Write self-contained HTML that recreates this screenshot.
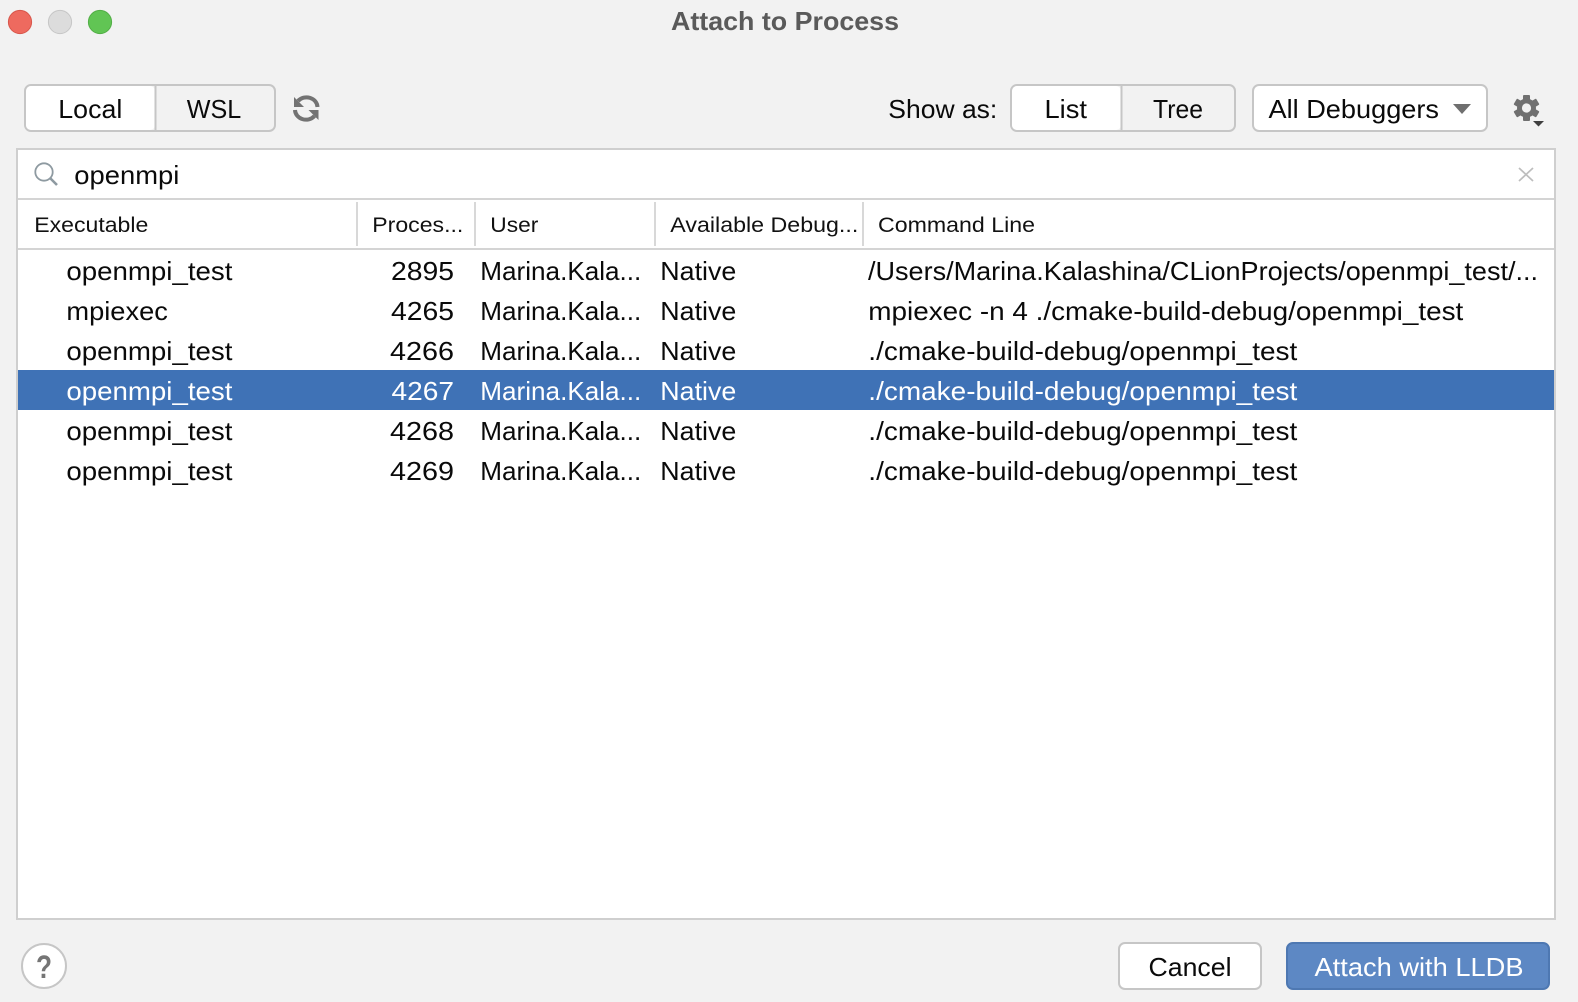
<!DOCTYPE html>
<html><head><meta charset="utf-8"><title>Attach to Process</title>
<style>
html,body{margin:0;padding:0;background:#f2f2f2;width:1578px;height:1002px;overflow:hidden}
svg{display:block}
text{font-family:"Liberation Sans",sans-serif;font-size:26px;fill:#0a0a0a}
.h{font-size:21.5px;fill:#111}
.w{fill:#fff}
</style></head><body>
<svg width="1578" height="1002" viewBox="0 0 1578 1002" xmlns="http://www.w3.org/2000/svg">
<rect width="1578" height="1002" fill="#f2f2f2"/>
<!-- traffic lights -->
<circle cx="20" cy="22" r="11.6" fill="#ee6a5f" stroke="#d8564b" stroke-width="1"/>
<circle cx="60" cy="22" r="11.6" fill="#dcdcdc" stroke="#c6c6c6" stroke-width="1"/>
<circle cx="100" cy="22" r="11.6" fill="#61c554" stroke="#52ae46" stroke-width="1"/>
<text x="671" y="30" style="font-size:26px;font-weight:700;fill:#5a5a5a" textLength="228" lengthAdjust="spacingAndGlyphs">Attach to Process</text>

<!-- Local / WSL -->
<rect x="25" y="85" width="250" height="46" rx="6" fill="#f2f2f2" stroke="#c6c6c6" stroke-width="2"/>
<rect x="26" y="86" width="129" height="44" rx="5" fill="#fff"/>
<line x1="155.5" y1="85" x2="155.5" y2="131" stroke="#c6c6c6" stroke-width="2"/>
<text x="58.3" y="118" textLength="64" lengthAdjust="spacingAndGlyphs">Local</text>
<text x="186.8" y="118" textLength="54.5" lengthAdjust="spacingAndGlyphs">WSL</text>

<!-- refresh -->
<g fill="none" stroke="#737373" stroke-width="4">
<path d="M317.5 107 A11 10 0 0 0 298 101"/>
<path d="M295 110 A11 10 0 0 0 314.5 116"/>
</g>
<path d="M294 97 L294 107 L304 107 Z" fill="#737373"/>
<path d="M318.5 120 L318.5 110 L308.5 110 Z" fill="#737373"/>

<!-- Show as -->
<text x="888.3" y="118" textLength="109" lengthAdjust="spacingAndGlyphs">Show as:</text>
<rect x="1011" y="85" width="224" height="46" rx="6" fill="#f2f2f2" stroke="#c6c6c6" stroke-width="2"/>
<rect x="1012" y="86" width="109" height="44" rx="5" fill="#fff"/>
<line x1="1121.5" y1="85" x2="1121.5" y2="131" stroke="#c6c6c6" stroke-width="2"/>
<text x="1044.5" y="118" textLength="42.5" lengthAdjust="spacingAndGlyphs">List</text>
<text x="1153" y="118" textLength="50" lengthAdjust="spacingAndGlyphs">Tree</text>

<!-- Debuggers -->
<rect x="1253" y="85" width="234" height="46" rx="6" fill="#fff" stroke="#c6c6c6" stroke-width="2"/>
<text x="1268.5" y="118" textLength="170.5" lengthAdjust="spacingAndGlyphs">All Debuggers</text>
<path d="M1453 104 H1471 L1462 114 Z" fill="#6f6f6f"/>

<!-- gear -->
<g transform="translate(1526.5 108)">
<g fill="#707070">
<rect x="-3.5" y="-13" width="7" height="26" rx="1"/>
<rect x="-3.5" y="-13" width="7" height="26" rx="1" transform="rotate(60)"/>
<rect x="-3.5" y="-13" width="7" height="26" rx="1" transform="rotate(120)"/>
<circle r="9.5"/>
</g>
<circle r="4.6" fill="#f2f2f2"/>
</g>
<path d="M1533 121 H1544 L1538.5 126.5 Z" fill="#3f3f3f"/>

<!-- main panel -->
<rect x="17" y="149" width="1538" height="770" fill="#fff" stroke="#cfcfcf" stroke-width="2"/>
<line x1="18" y1="199" x2="1554" y2="199" stroke="#d4d4d4" stroke-width="2"/>
<line x1="18" y1="249" x2="1554" y2="249" stroke="#d4d4d4" stroke-width="2"/>

<!-- search -->
<g fill="none" stroke="#8e9aa1">
<circle cx="44" cy="172" r="8.7" stroke-width="1.8"/>
<line x1="50.5" y1="178.5" x2="57" y2="185" stroke-width="2.6"/>
</g>
<text x="74.3" y="184" textLength="105" lengthAdjust="spacingAndGlyphs">openmpi</text>
<g stroke="#bdbdbd" stroke-width="1.7"><line x1="1519" y1="168" x2="1533" y2="181"/><line x1="1533" y1="168" x2="1519" y2="181"/></g>

<!-- headers -->
<g stroke="#d8d8d8" stroke-width="2">
<line x1="357" y1="202" x2="357" y2="246"/>
<line x1="475" y1="202" x2="475" y2="246"/>
<line x1="655" y1="202" x2="655" y2="246"/>
<line x1="863" y1="202" x2="863" y2="246"/>
</g>
<text class="h" x="34.3" y="232" textLength="114" lengthAdjust="spacingAndGlyphs">Executable</text>
<text class="h" x="372.3" y="232" textLength="91" lengthAdjust="spacingAndGlyphs">Proces...</text>
<text class="h" x="490.3" y="232" textLength="48" lengthAdjust="spacingAndGlyphs">User</text>
<text class="h" x="670.3" y="232" textLength="188" lengthAdjust="spacingAndGlyphs">Available Debug...</text>
<text class="h" x="878" y="232" textLength="157" lengthAdjust="spacingAndGlyphs">Command Line</text>

<!-- selection -->
<rect x="18" y="370" width="1536" height="40" fill="#3f72b6"/>

<!-- rows -->
<text x="66.4" y="280" textLength="166" lengthAdjust="spacingAndGlyphs">openmpi_test</text>
<text x="391" y="280" textLength="63" lengthAdjust="spacingAndGlyphs">2895</text>
<text x="480.3" y="280" textLength="161" lengthAdjust="spacingAndGlyphs">Marina.Kala...</text>
<text x="660.3" y="280" textLength="76" lengthAdjust="spacingAndGlyphs">Native</text>
<text x="868" y="280" textLength="670" lengthAdjust="spacingAndGlyphs">/Users/Marina.Kalashina/CLionProjects/openmpi_test/...</text>

<text x="66.4" y="320" textLength="101.5" lengthAdjust="spacingAndGlyphs">mpiexec</text>
<text x="391" y="320" textLength="63" lengthAdjust="spacingAndGlyphs">4265</text>
<text x="480.3" y="320" textLength="161" lengthAdjust="spacingAndGlyphs">Marina.Kala...</text>
<text x="660.3" y="320" textLength="76" lengthAdjust="spacingAndGlyphs">Native</text>
<text x="868.3" y="320" textLength="595" lengthAdjust="spacingAndGlyphs">mpiexec -n 4 ./cmake-build-debug/openmpi_test</text>

<text x="66.4" y="360" textLength="166" lengthAdjust="spacingAndGlyphs">openmpi_test</text>
<text x="390" y="360" textLength="64" lengthAdjust="spacingAndGlyphs">4266</text>
<text x="480.3" y="360" textLength="161" lengthAdjust="spacingAndGlyphs">Marina.Kala...</text>
<text x="660.3" y="360" textLength="76" lengthAdjust="spacingAndGlyphs">Native</text>
<text x="868.3" y="360" textLength="429" lengthAdjust="spacingAndGlyphs">./cmake-build-debug/openmpi_test</text>

<text class="w" x="66.4" y="400" textLength="166" lengthAdjust="spacingAndGlyphs">openmpi_test</text>
<text class="w" x="391.5" y="400" textLength="62.5" lengthAdjust="spacingAndGlyphs">4267</text>
<text class="w" x="480.3" y="400" textLength="161" lengthAdjust="spacingAndGlyphs">Marina.Kala...</text>
<text class="w" x="660.3" y="400" textLength="76" lengthAdjust="spacingAndGlyphs">Native</text>
<text class="w" x="868.3" y="400" textLength="429" lengthAdjust="spacingAndGlyphs">./cmake-build-debug/openmpi_test</text>

<text x="66.4" y="440" textLength="166" lengthAdjust="spacingAndGlyphs">openmpi_test</text>
<text x="390" y="440" textLength="64" lengthAdjust="spacingAndGlyphs">4268</text>
<text x="480.3" y="440" textLength="161" lengthAdjust="spacingAndGlyphs">Marina.Kala...</text>
<text x="660.3" y="440" textLength="76" lengthAdjust="spacingAndGlyphs">Native</text>
<text x="868.3" y="440" textLength="429" lengthAdjust="spacingAndGlyphs">./cmake-build-debug/openmpi_test</text>

<text x="66.4" y="480" textLength="166" lengthAdjust="spacingAndGlyphs">openmpi_test</text>
<text x="390" y="480" textLength="64" lengthAdjust="spacingAndGlyphs">4269</text>
<text x="480.3" y="480" textLength="161" lengthAdjust="spacingAndGlyphs">Marina.Kala...</text>
<text x="660.3" y="480" textLength="76" lengthAdjust="spacingAndGlyphs">Native</text>
<text x="868.3" y="480" textLength="429" lengthAdjust="spacingAndGlyphs">./cmake-build-debug/openmpi_test</text>

<!-- help -->
<circle cx="44" cy="966" r="22" fill="#fff" stroke="#c6c6c6" stroke-width="2"/>
<text x="44" y="978" text-anchor="middle" textLength="16" lengthAdjust="spacingAndGlyphs" style="font-size:32px;font-weight:700;fill:#757575">?</text>

<!-- buttons -->
<rect x="1119" y="943" width="142" height="46" rx="6" fill="#fff" stroke="#c6c6c6" stroke-width="2"/>
<text x="1148.5" y="976" textLength="83" lengthAdjust="spacingAndGlyphs">Cancel</text>
<rect x="1287" y="943" width="262" height="46" rx="6" fill="#5d88c4" stroke="#4e78b2" stroke-width="2"/>
<text class="w" x="1314.5" y="976" textLength="209" lengthAdjust="spacingAndGlyphs">Attach with LLDB</text>
</svg>
</body></html>
